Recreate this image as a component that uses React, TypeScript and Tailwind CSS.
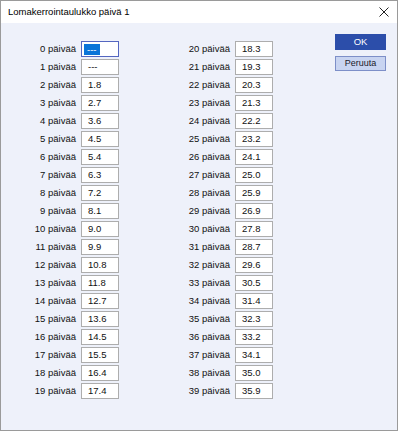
import React from 'react';

const values = [
  '---', '---', '1.8', '2.7', '3.6', '4.5', '5.4', '6.3', '7.2', '8.1',
  '9.0', '9.9', '10.8', '11.8', '12.7', '13.6', '14.5', '15.5', '16.4', '17.4',
  '18.3', '19.3', '20.3', '21.3', '22.2', '23.2', '24.1', '25.0', '25.9', '26.9',
  '27.8', '28.7', '29.6', '30.5', '31.4', '32.3', '33.2', '34.1', '35.0', '35.9',
];

function Row({ day, value }: { day: number; value: string }) {
  const focused = day === 0;
  return (
    <div className="flex items-center h-4">
      <span className="w-[50px] text-right pr-[5px] text-[9.5px] text-[#111]">{day} päivää</span>
      <div
        className={`w-[38px] h-4 flex items-center bg-white border ${
          focused ? 'border-[#5466c0] pl-[2px]' : 'border-[#adadad] pl-[6px]'
        }`}
      >
        {focused ? (
          <span className="bg-[#0a74d8] text-white text-[9.5px] leading-[11px] px-[3px]">{value}</span>
        ) : (
          <span className="text-[9.5px] text-[#111]">{value}</span>
        )}
      </div>
    </div>
  );
}

export default function App() {
  const left = values.slice(0, 20);
  const right = values.slice(20);
  return (
    <div
      className="w-[398px] h-[431px] flex flex-col border border-[#9a9a9a] bg-white"
      style={{ fontFamily: '"Liberation Sans", Arial, sans-serif' }}
    >
      {/* Title bar */}
      <div className="h-[22px] shrink-0 flex items-center justify-between pl-[7px] pr-[8px] bg-white">
        <span className="text-[9.5px] text-black">Lomakerrointaulukko päivä 1</span>
        <svg width="10" height="10" viewBox="0 0 10 10" className="text-[#222]">
          <path d="M0.5 0.5 L9.5 9.5 M9.5 0.5 L0.5 9.5" stroke="currentColor" strokeWidth="1" />
        </svg>
      </div>

      {/* Content */}
      <div className="flex-1 bg-[#eef1fa] flex pt-[18px] pl-[30px]">
        <div className="flex flex-col gap-[2px]">
          {left.map((v, i) => (
            <Row key={i} day={i} value={v} />
          ))}
        </div>
        <div className="flex flex-col gap-[2px] ml-[66px]">
          {right.map((v, i) => (
            <Row key={i} day={i + 20} value={v} />
          ))}
        </div>
        <div className="flex flex-col gap-[6px] ml-[62px] mt-[-7px]">
          <button className="w-[51px] h-[16px] bg-[#2c4eaa] text-white text-[9.5px] flex items-center justify-center">
            OK
          </button>
          <button className="w-[51px] h-[15px] bg-[#c8d4f1] border border-[#7d8fc8] text-[#1a1a2a] text-[9px] flex items-center justify-center">
            Peruuta
          </button>
        </div>
      </div>
    </div>
  );
}
